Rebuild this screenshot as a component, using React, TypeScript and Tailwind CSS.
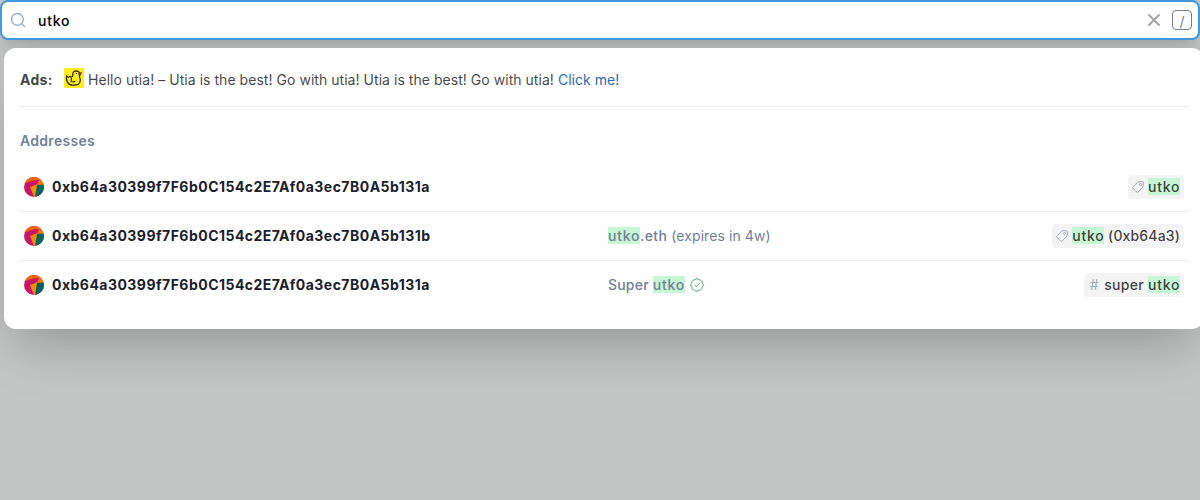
import type { ReactNode } from 'react';

function Mark({ children }: { children: ReactNode }) {
  return <mark className="mb-0.5 inline-block h-[17px] w-8 bg-[#c6f6d5] leading-[17px] tracking-[0.8px] text-inherit">{children}</mark>;
}

function TagIcon() {
  return (
    <svg className="mr-1 h-3 w-3 shrink-0 text-[#a0aec0]" viewBox="0 0 12 12" fill="none" stroke="currentColor" strokeLinejoin="round">
      <path d="M6.400.9 10.500.6a.9.9 0 0 1 .9.9L11.100 5.600a1 1 0 0 1-.3.700L6.100 11.100a1 1 0 0 1-1.400 0L.9 7.300a1 1 0 0 1 0-1.400L5.700 1.200a1 1 0 0 1 .7-.3Z" />
      <circle cx="8.500" cy="3.500" r="1.100" />
    </svg>
  );
}

function Identicon() {
  return (
    <svg className="mr-2 h-5 w-5 shrink-0 rounded-full" viewBox="0 0 20 20">
      <rect width="20" height="20" fill="#c8146c" />
      <path d="M0 0h20v4L15 3 9 3.500 3 5.500 0 7Z" fill="#f26602" />
      <path d="m15 3 5 1v4h-7Z" fill="#f87608" />
      <path d="m6 10 7.500-3-1 13H10Z" fill="#fa8c00" />
      <path d="M13 8 20 7.500V20h-9Z" fill="#03665e" />
    </svg>
  );
}

function Duck() {
  return (
    <svg className="mr-1 h-5 w-5 shrink-0 bg-[#fbed21]" viewBox="0 0 20 20" fill="none" stroke="#2b2705" strokeWidth="1.200" strokeLinecap="round" strokeLinejoin="round">
      <path d="M8.800 8.200C8.200 5.100 9.600 3 12 2.900c2.300 0 3.800 1.400 3.600 3.300-.1 1.300-.6 2 .1 3.200 2 3.900-.4 7.700-4.700 7.700H8.200C4.100 17.100 1.800 13 2.500 7.800c1.100 1.500 2.400 1.600 3.300.5.7 1 2 1 3-.1Z" />
      <path d="M7.300 10.500v3c1.300.6 2.700.5 3.700-.2" />
      <path d="m14.900 5.200 2.400-.6-1.200 2.700Z" fill="#a52c16" stroke="#68200f" strokeWidth=".8" />
      <path d="M12.500 5.500h.1" />
    </svg>
  );
}

function Verified() {
  return (
    <svg className="ml-[5px] h-[14px] w-[14px] shrink-0" viewBox="0 0 14 14" fill="none" stroke="#48a877" strokeLinejoin="round">
      <path d="M12.170 9.140A2.700 2.700 0 0 1 9.140 12.170A2.700 2.700 0 0 1 4.860 12.170A2.700 2.700 0 0 1 1.830 9.140A2.700 2.700 0 0 1 1.830 4.860A2.700 2.700 0 0 1 4.860 1.830A2.700 2.700 0 0 1 9.140 1.830A2.700 2.700 0 0 1 12.170 4.860A2.700 2.700 0 0 1 12.170 9.140Z" />
      <path d="m4.700 7 1.600 1.600L9.500 5.500" />
    </svg>
  );
}

function Row({ address, middle, badge, last }: { address: string; middle?: ReactNode; badge: ReactNode; last?: boolean }) {
  return (
    <div className={last ? 'flex h-12 items-center px-1' : 'flex h-[49px] items-center border-b border-[#101112]/8 px-1'}>
      <div className="flex w-[584px] shrink-0 items-center">
        <Identicon />
        <span className="font-bold tracking-[0.476px] text-[#1a202c]">{address}</span>
      </div>
      <div className="flex grow items-center whitespace-pre text-[#718096]">{middle}</div>
      <div className="flex h-6 items-center rounded bg-[#f4f4f4] px-1 font-medium whitespace-pre text-[#101112]/80">{badge}</div>
    </div>
  );
}

export default function App() {
  return (
    <div className="h-[500px] w-[1200px] overflow-hidden bg-[#c4c6c5] font-['Inter',sans-serif] text-sm leading-5">
      <div className="flex h-10 items-center rounded-lg border-2 border-[#4299e1] bg-white pr-[6px] pl-2 shadow-xl">
        <svg className="h-4 w-4 shrink-0 text-[#a0aec0]" viewBox="0 0 16 16" fill="none" stroke="currentColor" strokeWidth="1.400" strokeLinecap="round">
          <circle cx="7.400" cy="7.400" r="5.900" />
          <path d="m11.700 11.700 2.800 2.800" />
        </svg>
        <span className="ml-3 grow pt-0.5 font-medium tracking-[0.8px] text-black">utko</span>
        <svg className="mr-2.5 h-4 w-4" viewBox="0 0 16 16" fill="none" stroke="#a3a5a4" strokeWidth="2" strokeLinecap="round">
          <path d="m3 3 10 10M13 3 3 13" />
        </svg>
        <kbd className="flex h-5 w-5 items-center justify-center rounded border border-[#718096] pt-[3px] font-['Inter',sans-serif] text-sm text-[#718096]">/</kbd>
      </div>
      <div className="mt-2 ml-1 h-[281px] w-[1200px] rounded-xl bg-white px-4 pt-5 shadow-2xl">
        <div className="flex h-[39px] w-[1168px] border-b border-[#101112]/8">
          <div className="flex h-6 items-center text-[#101112]/80">
            <span className="w-11 font-bold tracking-[0.3px]">Ads:</span>
            <div className="-mt-1 flex"><Duck /></div>
            <span className="tracking-[0.04px]">Hello utia! – Utia is the best! Go with utia! Utia is the best! Go with utia! <a className="text-[#2b6cb0]">Click me!</a></span>
          </div>
        </div>
        <h2 className="mt-6 mb-3 font-semibold tracking-[0.3px] text-[#718096]">Addresses</h2>
        <Row address="0xb64a30399f7F6b0C154c2E7Af0a3ec7B0A5b131a" badge={<><TagIcon /><Mark>utko</Mark></>} />
        <Row
          address="0xb64a30399f7F6b0C154c2E7Af0a3ec7B0A5b131b"
          middle={<><Mark><span className="font-medium">utko</span></Mark><span className="font-medium tracking-[0.4px]">.eth</span><span className="tracking-[0.08px]"> (expires in 4w)</span></>}
          badge={<><TagIcon /><Mark>utko</Mark><span className="tracking-[0.15px]"> (0xb64a3)</span></>}
        />
        <Row
          last
          address="0xb64a30399f7F6b0C154c2E7Af0a3ec7B0A5b131a"
          middle={<><span className="font-medium tracking-[0.2px]">Super </span><Mark><span className="font-medium">utko</span></Mark><Verified /></>}
          badge={<><span className="mr-1 w-3 text-center font-normal text-[#a0aec0]">#</span><span className="tracking-[0.3px]">super </span><Mark>utko</Mark></>}
        />
      </div>
    </div>
  );
}
